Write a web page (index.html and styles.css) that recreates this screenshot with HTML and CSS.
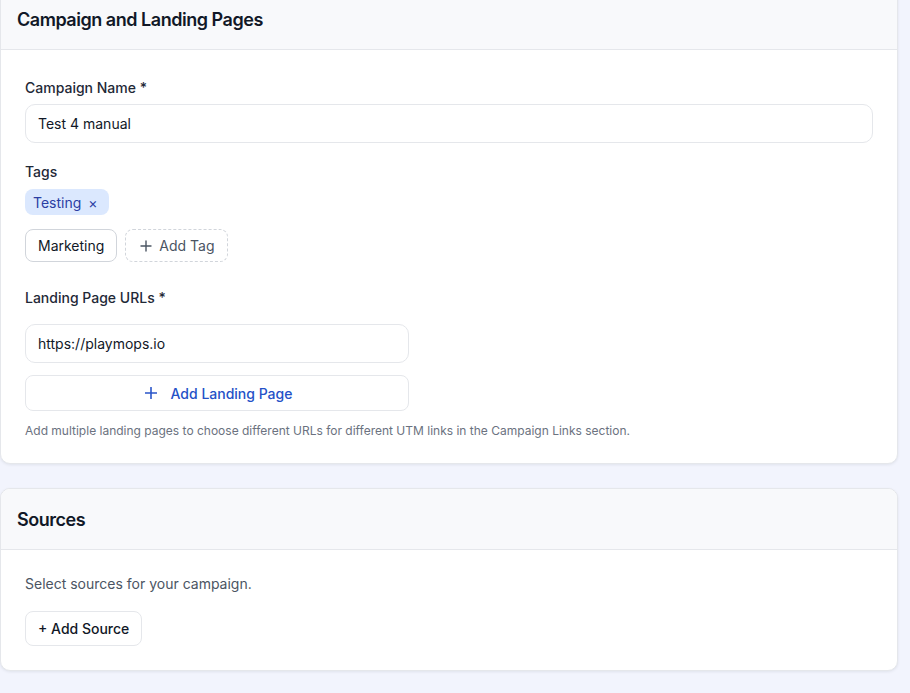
FILE: index.html
```html
<!DOCTYPE html>
<html>
<head>
<meta charset="utf-8">
<link rel="stylesheet" href="styles.css">
</head>
<body>
<div class="page">
  <section class="card card-first">
    <div class="card-header"><h2>Campaign and Landing Pages</h2></div>
    <div class="card-body">
      <label class="label">Campaign Name *</label>
      <div class="input">Test 4 manual</div>

      <label class="label label-tags">Tags</label>
      <div class="chips">
        <span class="chip">Testing <span class="chip-x">×</span></span>
      </div>
      <div class="tag-row">
        <button class="tag-btn">Marketing</button>
        <button class="tag-add">
          <svg width="12" height="12" viewBox="0 0 12 12"><path d="M6 1v10M1 6h10" stroke="#4b5563" stroke-width="1.4" fill="none" stroke-linecap="round"/></svg>
          Add Tag
        </button>
      </div>

      <label class="label label-urls">Landing Page URLs *</label>
      <div class="input input-narrow">https://playmops.io</div>
      <button class="add-lp">
        <svg width="12" height="12" viewBox="0 0 12 12"><path d="M6 0.5v11M0.5 6h11" stroke="#2a55c9" stroke-width="1.6" fill="none" stroke-linecap="round"/></svg>
        <span>Add Landing Page</span>
      </button>
      <p class="help">Add multiple landing pages to choose different URLs for different UTM links in the Campaign Links section.</p>
    </div>
  </section>

  <section class="card">
    <div class="card-header"><h2>Sources</h2></div>
    <div class="card-body card-body-sources">
      <p class="muted">Select sources for your campaign.</p>
      <button class="add-source">+ Add Source</button>
    </div>
  </section>
</div>
</body>
</html>
```

FILE: styles.css
```css
* { box-sizing: border-box; }
html, body { margin: 0; padding: 0; }
body {
  background: #f2f4fd;
  font-family: Inter, "Noto Sans", sans-serif;
  color: #111827;
  height: 693px;
  overflow: hidden;
}
.page {
  display: flex;
  flex-direction: column;
  gap: 24px;
  margin-top: -12px;
  width: 898px;
}
.card {
  background: #fff;
  border: 1px solid #e5e7eb;
  border-radius: 10px;
  box-shadow: 0 1px 3px rgba(17, 24, 39, 0.08);
  overflow: hidden;
}
.card-header {
  background: #f8f9fb;
  border-bottom: 1px solid #e5e7eb;
  height: 61px;
  padding: 0 16px;
  display: flex;
  align-items: center;
}
.card-header h2 {
  margin: 0;
  font-size: 18px;
  font-weight: 600;
  color: #111827;
  letter-spacing: -0.47px;
}
.card-body {
  padding: 28px 24px 24px;
  display: flex;
  flex-direction: column;
  align-items: flex-start;
}
.label {
  font-size: 14px;
  line-height: 20px;
  font-weight: 500;
  color: #1f2937;
}
.input {
  margin-top: 6px;
  width: 100%;
  height: 39px;
  border: 1px solid #e5e7eb;
  border-radius: 10px;
  padding: 0 12px;
  display: flex;
  align-items: center;
  font-size: 14px;
  color: #111827;
}
.input-narrow {
  width: 384px;
  margin-top: 16px;
}
.label-tags { margin-top: 19px; }
.chips { margin-top: 7px; display: flex; }
.chip {
  background: #dbe8fe;
  color: #2b3ea3;
  font-size: 14px;
  height: 26px;
  padding: 0 11px 0 8px;
  border-radius: 8px;
  display: inline-flex;
  align-items: center;
  gap: 7px;
}
.chip-x { font-size: 14px; color: #2b3ea3; }
.tag-row {
  margin-top: 14px;
  display: flex;
  gap: 8px;
}
button {
  font-family: inherit;
  cursor: pointer;
}
.tag-btn {
  height: 33px;
  padding: 0 12px;
  background: #fff;
  border: 1px solid #d1d5db;
  border-radius: 8px;
  font-size: 14px;
  color: #111827;
}
.tag-add {
  height: 33px;
  padding: 0 12px 0 14px;
  background: #fff;
  border: 1px dashed #d1d5db;
  border-radius: 8px;
  font-size: 14px;
  color: #4b5563;
  display: flex;
  align-items: center;
  gap: 7px;
}
.label-urls { margin-top: 26px; }
.add-lp {
  margin-top: 12px;
  width: 384px;
  height: 36px;
  background: #fff;
  border: 1px solid #e5e7eb;
  border-radius: 8px;
  display: flex;
  align-items: center;
  justify-content: center;
  gap: 14px;
  padding-left: 9px;
  font-size: 14px;
  font-weight: 500;
  color: #2451c7;
}
.help {
  margin: 12px 0 0;
  font-size: 12px;
  line-height: 16px;
  color: #6b7280;
}
.card-body-sources { padding-top: 24px; }
.muted {
  margin: 0;
  font-size: 14px;
  line-height: 20px;
  color: #4b5563;
}
.add-source {
  margin-top: 17px;
  height: 35px;
  padding: 0 12px;
  background: #fff;
  border: 1px solid #e5e7eb;
  border-radius: 8px;
  font-size: 14px;
  font-weight: 500;
  color: #111827;
}
```
